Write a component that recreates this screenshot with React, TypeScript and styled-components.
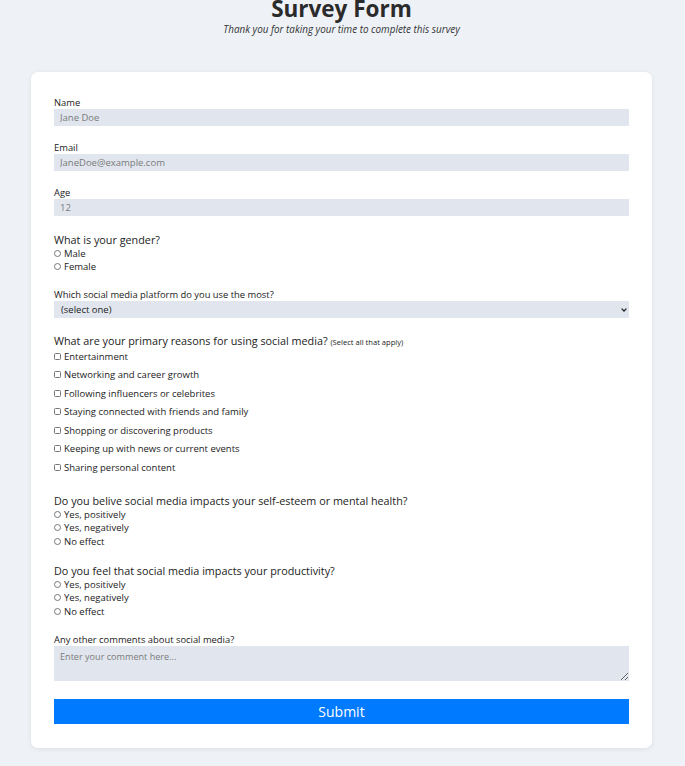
import React from "react";
import styled, { createGlobalStyle } from "styled-components";

const Global = createGlobalStyle`
  html, body { margin: 0; padding: 0; background: #eef2f7; }
  body { font-family: "Open Sans", "Liberation Sans", sans-serif; color: #222; }
  * { box-sizing: border-box; }
`;

const Page = styled.div`
  display: flex;
  flex-direction: column;
  align-items: center;
  padding-bottom: 19px;
  padding-right: 2px;
`;

const Header = styled.header`
  display: flex;
  flex-direction: column;
  align-items: center;
  height: 72px;
`;

const Title = styled.h1`
  margin: -5px 0 0;
  font-size: 22.5px;
  line-height: 28px;
  font-weight: 700;
  color: #2b2b2b;
`;

const Subtitle = styled.p`
  margin: 0;
  font-size: 9.9px;
  line-height: 13px;
  font-style: italic;
  color: #333;
`;

const Card = styled.form`
  width: 621px;
  background: #fff;
  border-radius: 7px;
  box-shadow: 0 1px 5px rgba(0, 0, 0, 0.08);
  padding: 24px 23px 24px;
  display: flex;
  flex-direction: column;
`;

const Field = styled.div<{ $gap?: number }>`
  display: flex;
  flex-direction: column;
  margin-bottom: ${(p) => p.$gap ?? 14.5}px;
`;

const Label = styled.label`
  font-size: 9.4px;
  line-height: 13px;
  color: #222;
`;

const Question = styled.div`
  font-size: 10.8px;
  line-height: 15px;
  color: #222;
`;

const Hint = styled.span`
  font-size: 7.6px;
`;

const TextInput = styled.input`
  height: 17px;
  border: none;
  background: #e1e6ee;
  padding: 0 6px;
  font-family: inherit;
  font-size: 9.5px;
  color: #777;
  &::placeholder { color: #7a7a7a; }
`;

const SelectWrap = styled.div`
  position: relative;
  display: flex;
`;

const Select = styled.select`
  flex: 1;
  height: 17px;
  border: none;
  background: #e1e6ee;
  padding: 0 7px;
  font-family: inherit;
  font-size: 9.5px;
  color: #222;
  appearance: none;
  -webkit-appearance: none;
  border-radius: 0;
`;

const Chevron = styled.svg`
  position: absolute;
  right: 2px;
  top: 7px;
  width: 6px;
  height: 4px;
  pointer-events: none;
`;

const TextArea = styled.textarea`
  height: 35px;
  border: none;
  background: #e1e6ee;
  padding: 4px 6px;
  font-family: inherit;
  font-size: 9.1px;
  resize: vertical;
  &::placeholder { color: #7a7a7a; }
`;

const OptionList = styled.div<{ $gap: number }>`
  display: flex;
  flex-direction: column;
  gap: ${(p) => p.$gap}px;
`;

const Option = styled.label<{ $row: number }>`
  display: flex;
  align-items: center;
  height: ${(p) => p.$row}px;
  font-size: 9.5px;
  color: #222;
  gap: 2px;
`;

const Mark = styled.input<{ $round?: boolean }>`
  appearance: none;
  -webkit-appearance: none;
  width: 7px;
  height: 7px;
  margin: 0 1px 0 0;
  border: 1px solid #777;
  border-radius: ${(p) => (p.$round ? "50%" : "1.5px")};
  background: #fff;
  flex: none;
`;

const Submit = styled.button`
  margin-top: 18px;
  height: 25px;
  border: none;
  background: #007bff;
  color: #fff;
  font-family: inherit;
  font-size: 14px;
  cursor: pointer;
`;

const reasons = [
  "Entertainment",
  "Networking and career growth",
  "Following influencers or celebrites",
  "Staying connected with friends and family",
  "Shopping or discovering products",
  "Keeping up with news or current events",
  "Sharing personal content",
];

const effect = ["Yes, positively", "Yes, negatively", "No effect"];

export default function App() {
  return (
    <>
      <Global />
      <Page>
        <Header>
          <Title>Survey Form</Title>
          <Subtitle>Thank you for taking your time to complete this survey</Subtitle>
        </Header>
        <Card onSubmit={(e) => e.preventDefault()}>
          <Field>
            <Label>Name</Label>
            <TextInput placeholder="Jane Doe" />
          </Field>
          <Field $gap={15}>
            <Label>Email</Label>
            <TextInput placeholder="JaneDoe@example.com" />
          </Field>
          <Field $gap={16}>
            <Label>Age</Label>
            <TextInput placeholder="12" />
          </Field>
          <Field $gap={14.5}>
            <Question>What is your gender?</Question>
            <OptionList $gap={0}>
              <Option $row={13.5}><Mark $round type="radio" name="g" />Male</Option>
              <Option $row={13.5}><Mark $round type="radio" name="g" />Female</Option>
            </OptionList>
          </Field>
          <Field $gap={14.5}>
            <Label>Which social media platform do you use the most?</Label>
            <SelectWrap>
              <Select defaultValue="">
                <option value="">(select one)</option>
                <option>Instagram</option>
                <option>TikTok</option>
              </Select>
              <Chevron viewBox="0 0 6 4">
                <path d="M0.6 0.6 L3 3 L5.4 0.6" fill="none" stroke="#222" strokeWidth="1.3" />
              </Chevron>
            </SelectWrap>
          </Field>
          <Field $gap={19}>
            <Question>
              What are your primary reasons for using social media? <Hint>(Select all that apply)</Hint>
            </Question>
            <OptionList $gap={5.5}>
              {reasons.map((r) => (
                <Option $row={13} key={r}><Mark type="checkbox" />{r}</Option>
              ))}
            </OptionList>
          </Field>
          <Field $gap={14.5}>
            <Question>Do you belive social media impacts your self-esteem or mental health?</Question>
            <OptionList $gap={0}>
              {effect.map((r) => (
                <Option $row={13.5} key={r}><Mark $round type="radio" name="m" />{r}</Option>
              ))}
            </OptionList>
          </Field>
          <Field $gap={15}>
            <Question>Do you feel that social media impacts your productivity?</Question>
            <OptionList $gap={0}>
              {effect.map((r) => (
                <Option $row={13.5} key={r}><Mark $round type="radio" name="p" />{r}</Option>
              ))}
            </OptionList>
          </Field>
          <Field $gap={0}>
            <Label>Any other comments about social media?</Label>
            <TextArea placeholder="Enter your comment here..." />
          </Field>
          <Submit type="submit">Submit</Submit>
        </Card>
      </Page>
    </>
  );
}
